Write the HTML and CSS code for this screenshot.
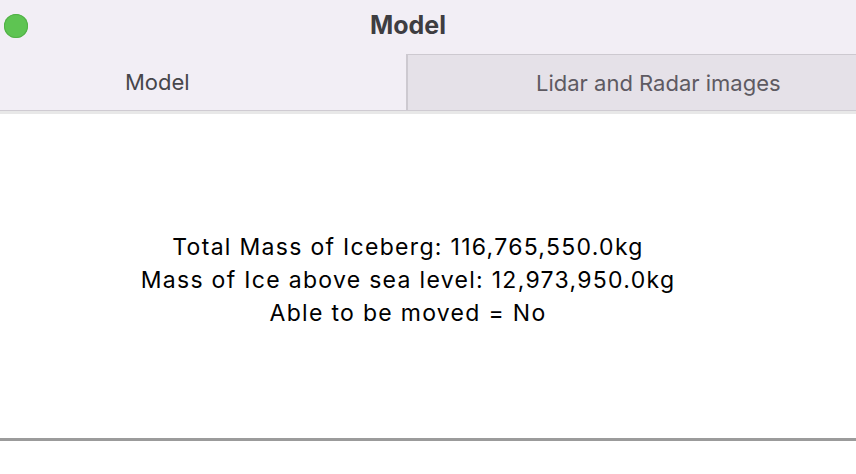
FILE: index.html
```html
<!DOCTYPE html>
<html>
<head>
<meta charset="utf-8">
<link rel="stylesheet" href="styles.css">
</head>
<body>
<div class="window">
  <div class="titlebar">
    <span class="dot"></span>
    <div class="title">Model</div>
  </div>
  <div class="tabs">
    <div class="tab tab-active">Model</div>
    <div class="tab tab-inactive">Lidar and Radar images</div>
  </div>
  <div class="strip"></div>
  <div class="content">
    <div class="lines">
      <div>Total Mass of Iceberg: 116,765,550.0kg</div>
      <div>Mass of Ice above sea level: 12,973,950.0kg</div>
      <div>Able to be moved = No</div>
    </div>
  </div>
  <div class="rule"></div>
</div>
</body>
</html>
```
FILE: styles.css
```css
* { box-sizing: border-box; }
html, body { margin: 0; padding: 0; background: #ffffff; }
body { font-family: Inter, "Noto Sans", "Liberation Sans", sans-serif; width: 856px; height: 474px; overflow: hidden; }
.window { display: flex; flex-direction: column; height: 474px; }
.titlebar { height: 54px; background: #f2eef5; display: flex; align-items: center; position: relative; }
.dot { position: absolute; left: 4px; top: 14px; width: 24px; height: 24px; border-radius: 50%; background: #5ec452; box-shadow: inset 0 0 0 1px #52b047; }
.title { width: 816px; text-align: center; font-weight: 700; font-size: 25px; color: #3e3d41; padding-bottom: 4px; }
.tabs { display: flex; height: 57px; background: #f2eef5; border-bottom: 1px solid #cfcbd2; }
.tab { display: flex; align-items: center; font-size: 22px; }
.tab-active { width: 406px; padding-left: 125px; color: #47464a; }
.tab-inactive { flex: 1; background: #e5e1e8; border-top: 1px solid #cdc9d0; border-left: 2px solid #cdc9d0; padding-left: 128px; color: #5e5a62; }
.strip { height: 3px; background: #e8e8e8; }
.content { flex: 0 0 auto; height: 324px; display: flex; align-items: center; }
.lines { width: 816px; text-align: center; font-size: 23px; letter-spacing: 1.3px; line-height: 33px; color: #000; padding-top: 8px; }
.rule { height: 3px; background: #9b9b9b; }
```
